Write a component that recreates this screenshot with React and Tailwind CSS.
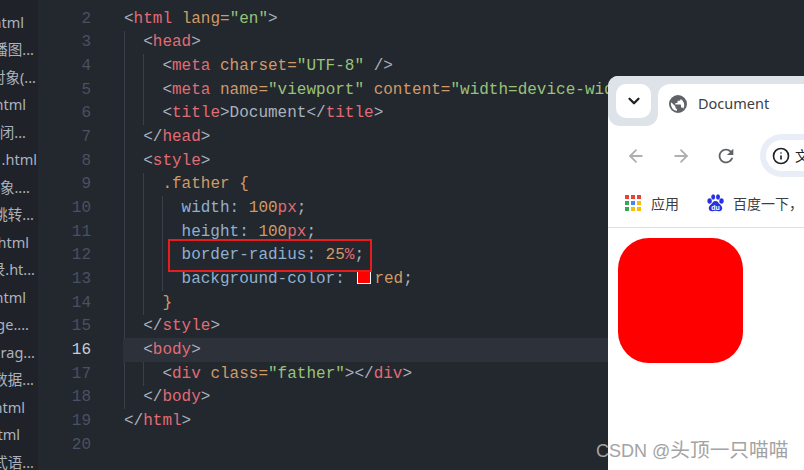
import { Info, ArrowLeft, ArrowRight, ChevronDown } from "lucide-react"

const files = [
    { text: "html", cls: "pr-[14px]" },
    { text: "轮播图...", cls: "pr-[4px]" },
    { text: "对象(...", cls: "pr-[2px]" },
    { text: "html", cls: "pr-[12px]" },
    { text: "闭...", cls: "pr-[12px]" },
    { text: ".html", cls: "pr-[1px]" },
    { text: "象....", cls: "pr-[8px]" },
    { text: "跳转...", cls: "pr-[4px]" },
    { text: "html", cls: "pr-[9px]" },
    { text: "录.ht...", cls: "pr-[3px]" },
    { text: "html", cls: "pr-[12px]" },
    { text: "ge....", cls: "pr-[9px]" },
    { text: "rag...", cls: "pr-[3px]" },
    { text: "数据...", cls: "pr-[4px]" },
    { text: "html", cls: "pr-[13px]" },
    { text: "tml", cls: "pr-[18px]" },
    { text: "式语...", cls: "pr-[4px]" },
]

const P = ({ children }) => <span className="text-[#abb2bf]">{children}</span>
const T = ({ children }) => <span className="text-[#e06c75]">{children}</span>
const O = ({ children }) => <span className="text-[#d19a66]">{children}</span>
const G = ({ children }) => <span className="text-[#98c379]">{children}</span>
const B = ({ children }) => <span className="text-[#8fb0d0]">{children}</span>

const lines = [
    { n: 2, depth: 0, code: <><P>&lt;</P><T>html</T> <O>lang=</O><G>"en"</G><P>&gt;</P></> },
    { n: 3, depth: 1, code: <><P>&lt;</P><T>head</T><P>&gt;</P></> },
    { n: 4, depth: 2, code: <><P>&lt;</P><T>meta</T> <O>charset=</O><G>"UTF-8"</G> <P>/&gt;</P></> },
    { n: 5, depth: 2, code: <><P>&lt;</P><T>meta</T> <O>name=</O><G>"viewport"</G> <O>content=</O><G>"width=device-wid</G></> },
    { n: 6, depth: 2, code: <><P>&lt;</P><T>title</T><P>&gt;Document&lt;/</P><T>title</T><P>&gt;</P></> },
    { n: 7, depth: 1, code: <><P>&lt;/</P><T>head</T><P>&gt;</P></> },
    { n: 8, depth: 1, code: <><P>&lt;</P><T>style</T><P>&gt;</P></> },
    { n: 9, depth: 2, code: <O>.father {"{"}</O> },
    { n: 10, depth: 3, code: <><B>width:</B> <O>100</O><T>px</T><P>;</P></> },
    { n: 11, depth: 3, code: <><B>height:</B> <O>100</O><T>px</T><P>;</P></> },
    { n: 12, depth: 3, code: <><B>border-radius:</B> <O>25</O><T>%</T><P>;</P></> },
    { n: 13, depth: 3, code: <><B>background-color:</B> <span className="inline-block w-[14px] h-[14px] ml-[3px] mr-[3px] align-[-1px] bg-[#ff0000] border border-white"></span><O>red</O><P>;</P></> },
    { n: 14, depth: 2, code: <O>{"}"}</O> },
    { n: 15, depth: 1, code: <><P>&lt;/</P><T>style</T><P>&gt;</P></> },
    { n: 16, depth: 1, active: true, code: <><P>&lt;</P><T>body</T><P>&gt;</P></> },
    { n: 17, depth: 2, code: <><P>&lt;</P><T>div</T> <O>class=</O><G>"father"</G><P>&gt;&lt;/</P><T>div</T><P>&gt;</P></> },
    { n: 18, depth: 1, code: <><P>&lt;/</P><T>body</T><P>&gt;</P></> },
    { n: 19, depth: 0, code: <><P>&lt;/</P><T>html</T><P>&gt;</P></> },
    { n: 20, depth: 0, code: null },
]

function CodeLine({ line }) {
    const guides = Array.from({ length: line.depth })
    return (
        <div className="flex h-[23.670px] items-center">
            <div className={`w-[53px] shrink-0 text-right ${line.active ? "text-[#c8ccd4]" : "text-[#495162]"}`}>
                {line.n}
            </div>
            <div className={`ml-[32px] pl-[1px] flex-1 flex h-full items-center whitespace-nowrap ${line.active ? "bg-[#2c313a]" : ""}`}>
                {!line.active && guides.map((_, i) => (
                    <span key={i} className="w-[19.200px] h-full shrink-0 border-l border-[#3b4048]"></span>
                ))}
                {line.active && guides.map((_, i) => (
                    <span key={i} className="w-[19.200px] h-full shrink-0"></span>
                ))}
                <span>{line.code}</span>
            </div>
        </div>
    )
}

function AppsIcon() {
    const colors = ["#ea4335", "#ea4335", "#ea4335", "#34a853", "#4285f4", "#fbbc04", "#34a853", "#fbbc04", "#fbbc04"]
    return (
        <div className="grid grid-cols-3 gap-[2px] w-[16px] h-[16px]">
            {colors.map((c, i) => (
                <span key={i} className="w-[4px] h-[4px]" style={{ backgroundColor: c }}></span>
            ))}
        </div>
    )
}

function BaiduIcon() {
    return (
        <svg width="17" height="18" viewBox="0 0 17 18">
            <g fill="#2932e1">
                <ellipse cx="2.6" cy="7" rx="2.2" ry="2.7" />
                <ellipse cx="6.2" cy="3" rx="2" ry="2.7" />
                <ellipse cx="11" cy="3" rx="2" ry="2.7" />
                <ellipse cx="14.5" cy="7" rx="2.2" ry="2.7" />
                <path d="M8.5 7c-2.5 0-3 2.2-4.6 3.6C2.4 12 1.6 13 1.8 14.7c.3 1.8 1.8 2.6 3.4 2.5 1.3-.1 2.2-.5 3.3-.5s2 .4 3.3.5c1.6.1 3.1-.7 3.4-2.5.2-1.7-.6-2.7-2.1-4.1C11.500 9.200 11 7 8.500 7z" />
            </g>
            <text x="8.500" y="15.500" textAnchor="middle" fontSize="7" fontWeight="700" fill="#ffffff" fontFamily="Liberation Sans">du</text>
        </svg>
    )
}

function BrowserWindow() {
    return (
        <div className="absolute left-[608px] top-[76px] w-[196px] h-[394px] bg-white rounded-tl-[10px] overflow-hidden font-['Noto_Sans','Noto_Sans_CJK_SC',sans-serif]">
            <div className="flex h-[50px]">
                <div className="w-[50px] h-[50px] shrink-0 bg-[#dee3ea] rounded-b-[12px] pl-[8px] pt-[8px]">
                    <div className="w-[35px] h-[34px] bg-white rounded-[10px] flex items-center justify-center">
                        <ChevronDown size={18} strokeWidth={3} className="text-[#202124]" />
                    </div>
                </div>
                <div className="flex-1 bg-[#dee3ea] pt-[8px]">
                    <div className="h-full bg-white rounded-tl-[12px] flex items-center pl-[11px] pb-[2px]">
                        <svg width="18" height="18" viewBox="0 0 24 24" fill="#5f6368" className="shrink-0">
                            <path d="M12 0a12 12 0 1 0 0 24 12 12 0 0 0 0-24zM2.500 12c0-.9.100-1.700.400-2.500l5.600 5.600v1.200c0 1.100.900 2 2 2v3.100A9.500 9.500 0 0 1 2.500 12zm16.600 6.200c-.3-.9-1.100-1.500-2.100-1.500h-1v-3c0-.6-.5-1-1-1H8.500v-2h2c.6 0 1-.5 1-1v-2h2c1.100 0 2-.9 2-2v-.5a9.500 9.500 0 0 1 3.600 13z" />
                        </svg>
                        <span className="ml-[11px] text-[14.500px] text-[#3c4043] whitespace-nowrap">Document</span>
                    </div>
                </div>
            </div>
            <div className="flex items-center h-[58px] pl-[18px] pt-[1px]">
                <ArrowLeft size={20} strokeWidth={2.200} className="text-[#b0b0b0] shrink-0" />
                <ArrowRight size={20} strokeWidth={2.200} className="ml-[25px] text-[#b0b0b0] shrink-0" />
                <svg width="22" height="22" viewBox="0 0 24 24" fill="#5f6368" className="ml-[24px] shrink-0">
                    <path d="M17.650 6.350A7.958 7.958 0 0 0 12 4c-4.420 0-7.990 3.580-7.990 8s3.570 8 7.990 8c3.730 0 6.840-2.550 7.730-6h-2.080A5.990 5.990 0 0 1 12 18c-3.310 0-6-2.690-6-6s2.690-6 6-6c1.660 0 3.140.690 4.220 1.780L13 11h7V4l-2.350 2.350z" />
                </svg>
                <div className="ml-[23px] flex-1 h-[43px] min-w-[60px] -mr-[20px] rounded-l-full border-[6px] border-r-0 border-[#e8edf7] bg-white flex items-center pl-[6px]">
                    <Info size={18} strokeWidth={2.200} className="text-[#202124] shrink-0" />
                    <span className="ml-[5px] text-[14px] text-[#202124] font-['Noto_Sans_CJK_SC',sans-serif]">文</span>
                </div>
            </div>
            <div className="flex items-center h-[44px] pl-[17px] pb-[5px] border-b border-[#e0e0e0] whitespace-nowrap text-[14px] text-[#3c4043]">
                <AppsIcon />
                <span className="ml-[10px]">应用</span>
                <span className="ml-[28px] shrink-0"><BaiduIcon /></span>
                <span className="ml-[9px]">百度一下，</span>
            </div>
            <div className="p-[10px]">
                <div className="w-[125px] h-[125px] bg-[#ff0000] rounded-[31px]"></div>
            </div>
        </div>
    )
}

export default function App() {
    return (
        <div className="relative w-[804px] h-[470px] overflow-hidden flex bg-[#23272e]">
            <div className="w-[38px] shrink-0 bg-[#1f2228] pt-[9px] overflow-hidden font-['Noto_Sans','Noto_Sans_CJK_SC',sans-serif] text-[14.500px] text-[#abb2bf]">
                {files.map((f, i) => (
                    <div key={i} className={`h-[27.500px] flex items-center justify-end whitespace-nowrap ${f.cls}`}>
                        {f.text}
                    </div>
                ))}
            </div>
            <div className="flex-1 pt-[7px] font-['Liberation_Mono',monospace] text-[16px]">
                {lines.map((line) => (
                    <CodeLine key={line.n} line={line} />
                ))}
            </div>

            <div className="absolute left-[168px] top-[239px] w-[204px] h-[33px] border-2 border-[#e81c1c]"></div>

            <BrowserWindow />

            <div className="absolute left-[596px] top-[436px] text-[18px] text-[#a3a3a3] whitespace-nowrap font-['Liberation_Sans','Noto_Sans_CJK_SC',sans-serif]">
                CSDN @<span className="text-[19.700px]">头顶一只喵喵</span>
            </div>
        </div>
    )
}
